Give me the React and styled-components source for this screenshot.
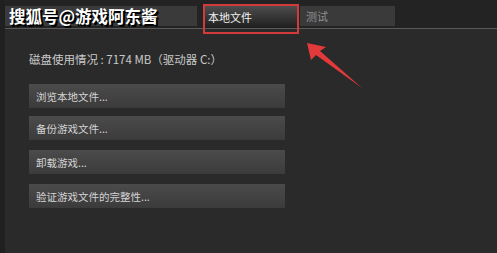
import React from "react";
import styled, { createGlobalStyle } from "styled-components";

const Global = createGlobalStyle`
  html, body {
    margin: 0;
    padding: 0;
    background: #202020;
  }
`;

const Page = styled.div`
  position: relative;
  width: 497px;
  height: 253px;
  overflow: hidden;
  background: #202020;
  display: flex;
  flex-direction: column;
  padding-left: 5px;
  box-sizing: border-box;
  font-family: "Noto Sans CJK SC", "Liberation Sans", sans-serif;
`;

const TabBar = styled.div`
  display: flex;
  align-items: flex-start;
  height: 28px;
  padding-top: 6px;
  box-sizing: border-box;
  background: #232323;
`;

const Tab = styled.div`
  width: ${(p) => p.width}px;
  margin-left: ${(p) => p.offset || 0}px;
  height: ${(p) => (p.active ? 22 : 20)}px;
  box-sizing: border-box;
  padding-left: ${(p) => (p.active ? 4 : 6)}px;
  display: flex;
  align-items: center;
  font-size: 11px;
  color: ${(p) => (p.active ? "#f2f2f2" : "#8e8e8e")};
  background: ${(p) =>
    p.active ? "linear-gradient(#4d4d4d, #1e1e1e)" : "#3a3a3a"};
`;

const Watermark = styled.span`
  font-size: 16.5px;
  font-weight: 700;
  color: #fff;
  margin-left: -2px;
  text-shadow: 2px 2px 0 #000, 1px 1px 0 #000;
  white-space: nowrap;
`;

const Panel = styled.div`
  flex: 1;
  background: #2a2a2a;
  border-top: 1px solid #5a5a5a;
  padding: 23px 0 0 24px;
  display: flex;
  flex-direction: column;
`;

const Usage = styled.div`
  font-size: 11.5px;
  color: #c9c9c9;
  line-height: 15px;
  margin-bottom: 17px;
`;

const ButtonList = styled.div`
  display: flex;
  flex-direction: column;
  gap: 10px;
`;

const ActionButton = styled.div`
  width: 256px;
  height: 24px;
  box-sizing: border-box;
  padding-left: 7px;
  display: flex;
  align-items: center;
  font-size: 10.5px;
  color: #d4d4d4;
  background: linear-gradient(#4b4b4b, #3b3b3b);

  &:first-child {
    margin-bottom: -2px;
  }
`;

const Highlight = styled.div`
  position: absolute;
  left: 203px;
  top: 4px;
  width: 96px;
  height: 30px;
  box-sizing: border-box;
  border: 2px solid #d33a3a;
`;

const Arrow = styled.svg`
  position: absolute;
  left: 0;
  top: 0;
  pointer-events: none;
`;

const actions = [
  "浏览本地文件...",
  "备份游戏文件...",
  "卸载游戏...",
  "验证游戏文件的完整性...",
];

export default function App() {
  return (
    <>
      <Global />
      <Page>
        <TabBar>
          <Tab width={192}>
            <Watermark>搜狐号@游戏阿东酱</Watermark>
          </Tab>
          <Tab width={93} offset={7} active>
            本地文件
          </Tab>
          <Tab width={95} offset={3}>
            测试
          </Tab>
        </TabBar>
        <Panel>
          <Usage>磁盘使用情况 : 7174 MB（驱动器 C:）</Usage>
          <ButtonList>
            {actions.map((a) => (
              <ActionButton key={a}>{a}</ActionButton>
            ))}
          </ButtonList>
        </Panel>
        <Highlight />
        <Arrow width="497" height="253">
          <polygon
            points="307,43 326,47 320,51 362,88 316,55 311,60"
            fill="#e23a3a"
          />
        </Arrow>
      </Page>
    </>
  );
}
